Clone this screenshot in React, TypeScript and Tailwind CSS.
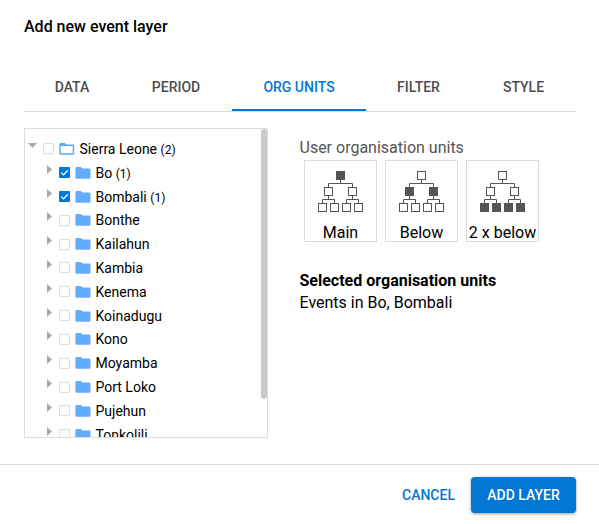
const FONT = "font-['Roboto','Liberation_Sans',sans-serif]";

const tabs = [
  { label: 'DATA', width: 'w-24' },
  { label: 'PERIOD', width: 'w-28' },
  { label: 'ORG UNITS', width: 'w-[134px]', active: true },
  { label: 'FILTER', width: 'w-[105px]' },
  { label: 'STYLE', width: 'w-[105px]' },
];

const units: { name: string; count?: number }[] = [
  { name: 'Bo', count: 1 },
  { name: 'Bombali', count: 1 },
  { name: 'Bonthe' },
  { name: 'Kailahun' },
  { name: 'Kambia' },
  { name: 'Kenema' },
  { name: 'Koinadugu' },
  { name: 'Kono' },
  { name: 'Moyamba' },
  { name: 'Port Loko' },
  { name: 'Pujehun' },
  { name: 'Tonkolili' },
];

function Checkbox({ checked }: { checked?: boolean }) {
  return (
    <svg width="11" height="11" viewBox="0 0 11 11" className="shrink-0">
      {checked ? (
        <>
          <rect width="11" height="11" rx="0.7" fill="#0277d4" />
          <path d="M2.2 5.6 4.5 7.9 8.9 3.2" fill="none" stroke="#fff" strokeWidth="1.3" />
        </>
      ) : (
        <rect x="0.5" y="0.5" width="10" height="10" rx="0.5" fill="#fff" stroke="#dedede" />
      )}
    </svg>
  );
}

function Folder({ open }: { open?: boolean }) {
  return (
    <svg width="16" height="12" viewBox="0 0 16 12" className="shrink-0">
      {open ? (
        <path
          fillRule="evenodd"
          fill="#5fa9fb"
          d="M1.6 0H6L7.4 1.5H13.8Q15.2 1.5 15.2 2.9V10.4Q15.2 11.8 13.8 11.8H1.6Q.3 11.8 .3 10.4V1.4Q.3 0 1.6 0ZM1.8 3V10.3H13.7V3Z"
        />
      ) : (
        <path
          fill="#62acfb"
          d="M1.8 0H6L7.4 1.5H14.2Q15.5 1.5 15.5 2.9V10.4Q15.5 11.8 14.2 11.8H1.8Q.4 11.8 .4 10.4V1.4Q.4 0 1.8 0Z"
        />
      )}
    </svg>
  );
}

function Hierarchy({ level }: { level: number }) {
  const fill = (n: number) => (n === level ? '#555' : '#fff');
  return (
    <svg
      width="46"
      height="42"
      viewBox="0 0 46 42"
      stroke="#555"
      strokeWidth="1"
      className="ml-[13px] shrink-0 self-start"
    >
      <path
        fill="none"
        d="M22.5 9V12.5M10.5 16V12.5H34.5V16M10.5 25V28.5M4.5 32V28.5H16.5V32M34.5 25V28.5M28.5 32V28.5H40.5V32"
      />
      <rect x="18.5" y="0.5" width="8" height="8" fill={fill(0)} />
      {[6.5, 30.5].map((x) => (
        <rect key={x} x={x} y="16.5" width="8" height="8" fill={fill(1)} />
      ))}
      {[0.5, 12.5, 24.5, 36.5].map((x) => (
        <rect key={x} x={x} y="32.5" width="8" height="8" fill={fill(2)} />
      ))}
    </svg>
  );
}

export default function App() {
  return (
    <div className={`${FONT} flex h-[524px] w-[599px] flex-col overflow-hidden bg-white text-black`}>
      <h1 className="px-6 pt-[15px] text-base leading-6 font-medium">Add new event layer</h1>

      <nav className="mt-6 mr-[23px] ml-6 flex h-[49px] border-b border-[#dcdcdc]">
        {tabs.map((t) => (
          <button
            key={t.label}
            className={`${t.width} h-12 shrink-0 text-sm font-medium ${
              t.active ? 'border-b-2 border-[#0277d4] pt-[2px] text-[#0277d4]' : 'text-[#4d4d4d]'
            }`}
          >
            {t.label}
          </button>
        ))}
      </nav>

      <main className="flex h-[352px] px-6 pt-4">
        <div className="flex h-[310px] w-[244px] justify-between overflow-hidden border border-[#dcdcdc]">
          <ul className="pt-2 text-sm">
            <li className="flex h-[23.82px] items-center pl-[3px]">
              <svg width="9" height="5" viewBox="0 0 9 5" className="mb-[7px]">
                <path d="M0 0H9L4.5 5Z" fill="#aaa" />
              </svg>
              <span className="ml-[6px] flex">
                <Checkbox />
              </span>
              <span className="mr-[4.5px] ml-[5px] flex">
                <Folder open />
              </span>
              <span>
                Sierra Leone <small className="text-xs">(2)</small>
              </span>
            </li>
            {units.map((u) => (
              <li key={u.name} className="flex h-[23.82px] items-center pl-[22px]">
                <svg width="5" height="9" viewBox="0 0 5 9" className="mb-[7px]">
                  <path d="M0 0V9L5 4.5Z" fill="#aaa" />
                </svg>
                <span className="ml-[7px] flex">
                  <Checkbox checked={u.count !== undefined} />
                </span>
                <span className="mr-[4.5px] ml-[5px] flex">
                  <Folder />
                </span>
                <span>
                  {u.name} {u.count && <small className="text-xs">({u.count})</small>}
                </span>
              </li>
            ))}
          </ul>
          <div className="h-[270px] w-[6px] rounded-full bg-[#c9cacb]" />
        </div>

        <section className="ml-[31.5px] pt-2">
          <p className="mb-px text-base leading-[23px] text-[#555]">User organisation units</p>
          <div className="ml-[4.5px] flex gap-2">
            {['Main', 'Below', '2 x below'].map((label, i) => (
              <button
                key={label}
                className="flex h-[82px] w-[73px] flex-col items-center border border-[#dcdcdc] pt-[10px]"
              >
                <Hierarchy level={i} />
                <span className="mt-3 text-base leading-4 whitespace-nowrap">{label}</span>
              </button>
            ))}
          </div>
          <h2 className="mt-[28px] text-base leading-[22px] font-bold">Selected organisation units</h2>
          <p className="text-base leading-[22px]">Events in Bo, Bombali</p>
        </section>
      </main>

      <footer className="flex h-[60px] items-start border-t border-[#dcdcdc] pt-3 text-sm font-medium">
        <button className="ml-[394px] h-9 w-[69px] text-[#0277d4]">CANCEL</button>
        <button className="ml-2 h-9 w-[105px] rounded bg-[#0277d4] text-white shadow-[0_1px_3px_rgba(0,0,0,0.4)]">
          ADD LAYER
        </button>
      </footer>
    </div>
  );
}
